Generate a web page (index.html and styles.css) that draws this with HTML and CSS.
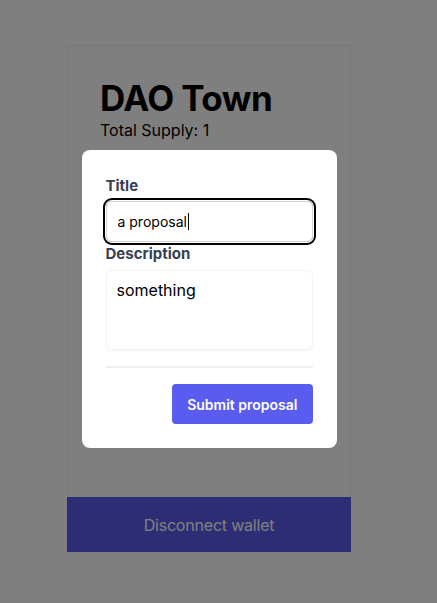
FILE: index.html
```html
<!DOCTYPE html>
<html lang="en">
<head>
<meta charset="utf-8">
<title>DAO Town</title>
<link rel="stylesheet" href="styles.css">
</head>
<body>
<div class="page">
  <main class="card">
    <header class="card-head">
      <h1 class="title">DAO Town</h1>
      <p class="supply">Total Supply: 1</p>
    </header>
    <div class="spacer"></div>
    <button class="disconnect" type="button">Disconnect wallet</button>
  </main>
</div>

<div class="overlay">
  <form class="modal">
    <label class="label">Title</label>
    <div class="input focused" role="textbox">a proposal<span class="caret"></span></div>
    <label class="label label-desc">Description</label>
    <div class="textarea" role="textbox">something</div>
    <hr class="divider">
    <div class="actions">
      <button class="submit" type="button">Submit proposal</button>
    </div>
  </form>
</div>
</body>
</html>
```

FILE: styles.css
```css
* { box-sizing: border-box; }

html, body {
  margin: 0;
  padding: 0;
  background: #ffffff;
  font-family: Inter, "Noto Sans", "Liberation Sans", sans-serif;
  color: #000;
}

.page {
  width: 418px;
  padding-top: 45px;
  display: flex;
  justify-content: center;
}

.card {
  width: 284px;
  height: 507px;
  border: 1px solid #eeeeee;
  display: flex;
  flex-direction: column;
}

.card-head {
  padding: 32px 32px 0 32px;
}

.title {
  margin: 0;
  font-size: 35px;
  line-height: 40px;
  font-weight: 700;
  letter-spacing: -0.6px;
}

.supply {
  margin: 0;
  font-size: 16px;
  line-height: 24px;
}

.spacer { flex: 1; }

.disconnect {
  margin: 0 -1px -1px -1px;
  height: 55px;
  border: 0;
  background: #585aeb;
  color: #ffffff;
  font-family: inherit;
  font-size: 16px;
  letter-spacing: -0.2px;
}

.overlay {
  position: fixed;
  inset: 0;
  background: rgba(0, 0, 0, 0.5);
  display: flex;
  align-items: center;
  justify-content: center;
  padding: 0 19px 5px 0;
}

.modal {
  width: 255px;
  background: #ffffff;
  border-radius: 8px;
  padding: 26px 24px 24px 24px;
  display: flex;
  flex-direction: column;
}

.label {
  display: block;
  font-size: 15px;
  line-height: 20px;
  font-weight: 700;
  color: #374151;
  margin-bottom: 5px;
}

.label-desc {
  margin-top: 2px;
  margin-bottom: 6px;
}

.input {
  height: 41px;
  border: 1px solid #d1d5db;
  border-radius: 6px;
  padding: 10px 11px;
  font-size: 14px;
  line-height: 20px;
  color: #000;
  box-shadow: 0 0 0 1px #ffffff, 0 0 0 3px #000000;
  display: flex;
  align-items: center;
}

.caret {
  display: inline-block;
  width: 1px;
  height: 17px;
  background: #000;
  margin-left: 1px;
}

.textarea {
  height: 80px;
  border: 1px solid #f3f4f6;
  border-radius: 6px;
  padding: 7px 10px;
  font-size: 16px;
  line-height: 24px;
  box-shadow: 0 1px 2px rgba(0, 0, 0, 0.04);
}

.divider {
  margin: 16px 0;
  border: 0;
  height: 2px;
  background: #f0f0f0;
}

.actions {
  display: flex;
  justify-content: flex-end;
}

.submit {
  height: 40px;
  padding: 0 15px;
  border: 0;
  border-radius: 4px;
  background: #5a5cef;
  color: #ffffff;
  font-family: inherit;
  font-size: 14px;
  font-weight: 600;
}
```
